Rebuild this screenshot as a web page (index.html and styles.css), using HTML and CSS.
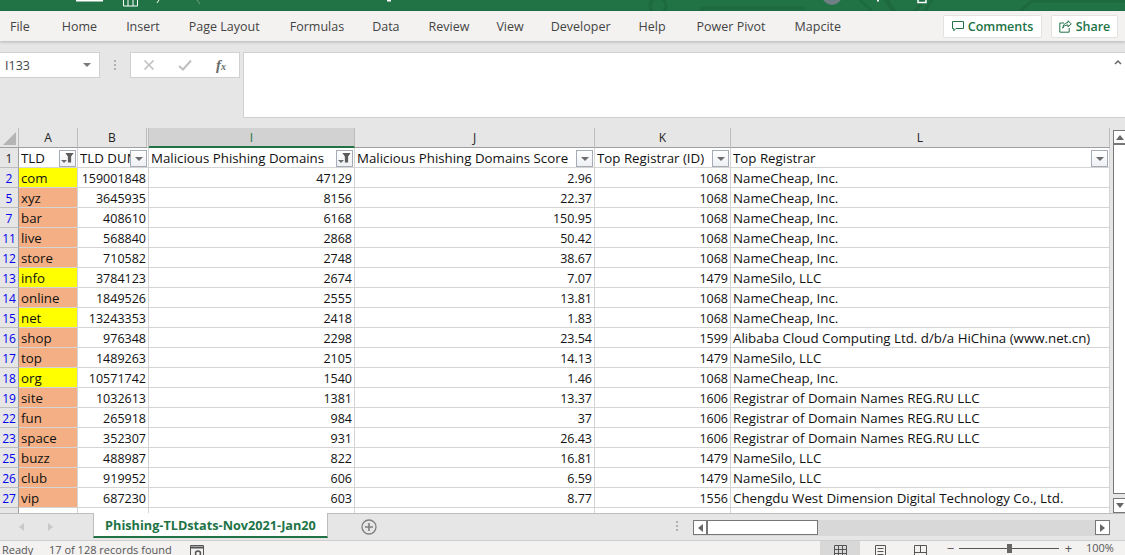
FILE: index.html
```html
<!DOCTYPE html>
<html lang="en">
<head>
<meta charset="utf-8">
<title>Phishing-TLDstats</title>
<link rel="stylesheet" href="styles.css">
</head>
<body>
<div class="app">
  <div class="titlebar">
    <svg class="title-art" viewBox="0 0 1125 11">
      <g fill="none" stroke="#1d6a3f" stroke-width="3">
        <circle cx="658" cy="6" r="8"/>
        <path d="M702 11V8H805"/>
        <path d="M860 0L872 11M885 0L893 11M925 11L932 0"/>
        <circle cx="905" cy="-3" r="17"/>
        <path d="M1020 11L1032 1H1125"/>
      </g>
      <path d="M76 0H103V1.5H76ZM387 0H391V1.5H387ZM877 0H879V1.5H877Z" fill="#fff"/>
      <path d="M123.500 0V6H137.500V0M128 0V6M133 0V6M157 3L159 0" fill="none" stroke="#fff"/>
      <path d="M197 0L200 4" fill="none" stroke="#6fa487"/>
      <path d="M918 0V2.500H926V0" fill="none" stroke="#fff" stroke-width="1.500"/>
      <circle cx="832" cy="-5" r="10" fill="#6f7f86"/>
    </svg>
  </div>
  <nav class="ribbon">
    <span class="tab tab-file">File</span>
    <span class="tab tab-home">Home</span>
    <span class="tab tab-insert">Insert</span>
    <span class="tab tab-layout">Page Layout</span>
    <span class="tab tab-formulas">Formulas</span>
    <span class="tab tab-data">Data</span>
    <span class="tab tab-review">Review</span>
    <span class="tab tab-view">View</span>
    <span class="tab tab-dev">Developer</span>
    <span class="tab tab-help">Help</span>
    <span class="tab tab-pivot">Power Pivot</span>
    <span class="tab">Mapcite</span>
    <span class="ribbon-actions">
      <button class="action action-comments"><svg class="action-icon" viewBox="0 0 12 12"><path d="M0.5 1.5H11.5V8.5H4L1.8 10.8V8.5H0.5Z" fill="none" stroke="#217346"/></svg>Comments</button>
      <button class="action action-share"><svg class="action-icon-share" viewBox="0 0 13 13"><path d="M9 2.5V0.8L12.3 3.8L9 6.8V5C6 5 4.5 6.2 3.8 8.2C3.8 5 6 2.8 9 2.5ZM5 3H0.8V12.2H10.2V8" fill="none" stroke="#217346"/></svg>Share</button>
    </span>
  </nav>
  <section class="formula-area">
    <div class="name-box"><span>I133</span><i class="caret"></i></div>
    <div class="dots"><i></i><i></i><i></i></div>
    <div class="fx-box">
      <svg class="fx-icon" viewBox="0 0 12 12"><path d="M1.5 1.5L10.5 10.5M10.5 1.5L1.5 10.5" stroke="#bfbfbf" stroke-width="1.6" fill="none"/></svg>
      <svg class="fx-icon check" viewBox="0 0 14 12"><path d="M1 7L5 10.5L13 1.5" stroke="#bfbfbf" stroke-width="2" fill="none"/></svg>
      <span class="fx-label">f<small>x</small></span>
    </div>
    <div class="formula-input"><svg class="collapse" viewBox="0 0 8 6"><path d="M1 5L4 2L7 5" stroke="#666" stroke-width="1.5" fill="none"/></svg></div>
  </section>
  <section class="sheet">
    <div class="grid-wrap">
      <table class="grid">
        <colgroup><col class="c-r"><col class="c-a"><col class="c-b"><col class="c-i"><col class="c-j"><col class="c-k"><col class="c-l"></colgroup>
        <thead>
          <tr class="heads">
            <th class="corner"><svg class="corner-mark" viewBox="0 0 13 13"><path d="M13 0V13H0Z" fill="#b4b4b4"/></svg></th>
            <th>A</th><th class="thick-r">B</th><th class="sel">I</th><th>J</th><th>K</th><th>L</th>
          </tr>
        </thead>
        <tbody>
          <tr class="filter-row">
            <td class="rn plain">1</td>
            <td><div class="hcell"><span class="clip">TLD</span><i class="fbtn on"></i></div></td>
            <td><div class="hcell"><span class="clip">TLD DUM</span><i class="fbtn"></i></div></td>
            <td><div class="hcell"><span class="clip">Malicious Phishing Domains</span><i class="fbtn on"></i></div></td>
            <td><div class="hcell"><span class="clip">Malicious Phishing Domains Score</span><i class="fbtn"></i></div></td>
            <td><div class="hcell"><span class="clip">Top Registrar (ID)</span><i class="fbtn"></i></div></td>
            <td><div class="hcell"><span class="clip">Top Registrar</span><i class="fbtn"></i></div></td>
          </tr>
          <tr><td class="rn">2</td><td class="y">com</td><td class="n">159001848</td><td class="n">47129</td><td class="n">2.96</td><td class="n">1068</td><td>NameCheap, Inc.</td></tr>
          <tr><td class="rn">5</td><td class="o">xyz</td><td class="n">3645935</td><td class="n">8156</td><td class="n">22.37</td><td class="n">1068</td><td>NameCheap, Inc.</td></tr>
          <tr><td class="rn">7</td><td class="o">bar</td><td class="n">408610</td><td class="n">6168</td><td class="n">150.95</td><td class="n">1068</td><td>NameCheap, Inc.</td></tr>
          <tr><td class="rn">11</td><td class="o">live</td><td class="n">568840</td><td class="n">2868</td><td class="n">50.42</td><td class="n">1068</td><td>NameCheap, Inc.</td></tr>
          <tr><td class="rn">12</td><td class="o">store</td><td class="n">710582</td><td class="n">2748</td><td class="n">38.67</td><td class="n">1068</td><td>NameCheap, Inc.</td></tr>
          <tr><td class="rn">13</td><td class="y">info</td><td class="n">3784123</td><td class="n">2674</td><td class="n">7.07</td><td class="n">1479</td><td>NameSilo, LLC</td></tr>
          <tr><td class="rn">14</td><td class="o">online</td><td class="n">1849526</td><td class="n">2555</td><td class="n">13.81</td><td class="n">1068</td><td>NameCheap, Inc.</td></tr>
          <tr><td class="rn">15</td><td class="y">net</td><td class="n">13243353</td><td class="n">2418</td><td class="n">1.83</td><td class="n">1068</td><td>NameCheap, Inc.</td></tr>
          <tr><td class="rn">16</td><td class="o">shop</td><td class="n">976348</td><td class="n">2298</td><td class="n">23.54</td><td class="n">1599</td><td>Alibaba Cloud Computing Ltd. d/b/a HiChina (www.net.cn)</td></tr>
          <tr><td class="rn">17</td><td class="o">top</td><td class="n">1489263</td><td class="n">2105</td><td class="n">14.13</td><td class="n">1479</td><td>NameSilo, LLC</td></tr>
          <tr><td class="rn">18</td><td class="y">org</td><td class="n">10571742</td><td class="n">1540</td><td class="n">1.46</td><td class="n">1068</td><td>NameCheap, Inc.</td></tr>
          <tr><td class="rn">19</td><td class="o">site</td><td class="n">1032613</td><td class="n">1381</td><td class="n">13.37</td><td class="n">1606</td><td>Registrar of Domain Names REG.RU LLC</td></tr>
          <tr><td class="rn">22</td><td class="o">fun</td><td class="n">265918</td><td class="n">984</td><td class="n">37</td><td class="n">1606</td><td>Registrar of Domain Names REG.RU LLC</td></tr>
          <tr><td class="rn">23</td><td class="o">space</td><td class="n">352307</td><td class="n">931</td><td class="n">26.43</td><td class="n">1606</td><td>Registrar of Domain Names REG.RU LLC</td></tr>
          <tr><td class="rn">25</td><td class="o">buzz</td><td class="n">488987</td><td class="n">822</td><td class="n">16.81</td><td class="n">1479</td><td>NameSilo, LLC</td></tr>
          <tr><td class="rn">26</td><td class="o">club</td><td class="n">919952</td><td class="n">606</td><td class="n">6.59</td><td class="n">1479</td><td>NameSilo, LLC</td></tr>
          <tr><td class="rn">27</td><td class="o">vip</td><td class="n">687230</td><td class="n">603</td><td class="n">8.77</td><td class="n">1556</td><td>Chengdu West Dimension Digital Technology Co., Ltd.</td></tr>
          <tr class="tail"><td class="rn"></td><td></td><td></td><td></td><td></td><td></td><td></td></tr>
        </tbody>
      </table>
      <div class="vscroll"><span class="vbtn vbtn-up"><i class="tri up"></i></span><span class="vtrack"></span><span class="vbtn"><i class="tri down"></i></span></div>
    </div>
  </section>
  <section class="tabbar">
    <div class="tabnav"><i class="tri left pale"></i><i class="tri right pale"></i></div>
    <div class="sheet-tab">Phishing-TLDstats-Nov2021-Jan20</div>
    <div class="add-sheet"><svg viewBox="0 0 16 16"><circle cx="8" cy="8" r="7" fill="none" stroke="#7f7f7f" stroke-width="1.3"/><path d="M8 4V12M4 8H12" stroke="#7f7f7f" stroke-width="1.6"/></svg></div>
    <div class="dots tab-dots"><i></i><i></i><i></i></div>
    <div class="hscroll"><span class="hbtn hbtn-l"><i class="tri left"></i></span><span class="hthumb"></span><span class="htrack"></span><span class="hbtn"><i class="tri right"></i></span></div>
  </section>
  <footer class="status">
    <span class="st-ready">Ready</span>
    <span class="st-count">17 of 128 records found</span>
    <svg class="st-macro" viewBox="0 0 14 14"><path d="M0.5 0.5H13.5V13.5H0.5Z" fill="none" stroke="#555"/><path d="M0.500 2.500H13.500" stroke="#555" stroke-width="2"/><circle cx="8" cy="8.500" r="2.500" fill="none" stroke="#555" stroke-width="1.500"/></svg>
    <span class="views">
      <span class="view active"><svg viewBox="0 0 13 13"><path d="M0.5 0.5H12.5V12.5H0.5ZM4.5 0.5V12.5M8.5 0.5V12.5M0.5 4.5H12.5M0.5 8.5H12.5" fill="none" stroke="#555"/></svg></span>
      <span class="view"><svg viewBox="0 0 13 13"><path d="M1.5 0.5H11.5V12.5H1.5ZM3.5 3.5H9.5M3.5 6.5H9.5M3.5 9.5H9.5" fill="none" stroke="#555"/></svg></span>
      <span class="view"><svg viewBox="0 0 13 13"><path d="M0.5 12.5V0.5H12.5V12.5M6.5 0.5V7.5M0.5 7.5H12.5" fill="none" stroke="#555"/></svg></span>
    </span>
    <span class="zoom-ctl"><span class="zsign">−</span><span class="zslider"><i class="zknob"></i></span><span class="zsign">+</span><span class="zpct">100%</span></span>
  </footer>
</div>
</body>
</html>
```
FILE: styles.css
```css
* { box-sizing: border-box; }
html, body { margin: 0; height: 100%; overflow: hidden; }
body { font-family: "Open Sans", "Noto Sans", sans-serif; color: #000; }
.app { width: 1125px; height: 555px; display: flex; flex-direction: column; overflow: hidden; background: #e6e6e6; }

.titlebar { height: 11px; flex: none; background: #217346; overflow: hidden; }
.title-art { display: block; width: 1125px; height: 11px; }

.ribbon { height: 30px; flex: none; display: flex; align-items: center; padding-left: 10px; background: #f3f2f1; box-shadow: 0 1px 3px rgba(0,0,0,.22); font-size: 12.5px; color: #444; position: relative; }
.tab { white-space: nowrap; }
.tab-file { margin-right: 32px; }
.tab-home { margin-right: 29px; }
.tab-insert { margin-right: 29px; }
.tab-layout { margin-right: 30px; }
.tab-formulas { margin-right: 28px; }
.tab-data { margin-right: 29px; }
.tab-review { margin-right: 27px; }
.tab-view { margin-right: 27px; }
.tab-dev { margin-right: 28px; }
.tab-help { margin-right: 31px; }
.tab-pivot { margin-right: 29px; }
.ribbon-actions { margin-left: auto; margin-right: 7px; display: flex; gap: 9px; }
.action { height: 23px; display: flex; align-items: center; gap: 4px; padding: 0; background: #fff; border: 1px solid #e3e2e0; border-radius: 2px; color: #217346; font: 600 12.5px "Open Sans", sans-serif; justify-content: center; }
.action-comments { width: 99px; }
.action-share { width: 67px; }
.action-icon { width: 12px; height: 12px; }
.action-icon-share { width: 13px; height: 13px; }

.formula-area { height: 87px; flex: none; display: flex; align-items: flex-start; padding-top: 11px; }
.name-box { width: 100px; height: 26px; background: #fff; border: 1px solid #d0d0d0; border-left: 0; display: flex; align-items: center; justify-content: space-between; padding: 0 8px 0 5px; font-size: 12.5px; color: #444; }
.caret { width: 0; height: 0; border: 4px solid transparent; border-top: 4px solid #7a7a7a; border-bottom: 0; }
.dots { display: flex; flex-direction: column; gap: 2px; width: 30px; align-items: center; padding-top: 8px; }
.dots i { width: 2px; height: 2px; background: #b0b0b0; }
.fx-box { width: 110px; height: 26px; background: #fff; border: 1px solid #d0d0d0; display: flex; align-items: center; padding: 0 12px; }
.fx-icon { width: 12px; height: 12px; flex: none; }
.fx-icon.check { width: 14px; margin-left: 23px; }
.fx-label { font: italic 700 15px "Liberation Serif", serif; color: #6a6a6a; margin-left: 24px; }
.fx-label small { font-size: 10px; }
.formula-input { flex: 1; height: 66px; margin-left: 3px; background: #fff; border: 1px solid #d0d0d0; border-right: 0; padding: 6px 3px 0 0; display: flex; justify-content: flex-end; align-items: flex-start; }
.collapse { width: 8px; height: 6px; }

.sheet { flex: 1; min-height: 0; overflow: hidden; }
.grid-wrap { display: flex; height: 100%; }
.grid { width: 1110px; flex: none; table-layout: fixed; border-collapse: separate; border-spacing: 0; background: #fff; font-size: 13.3px; color: #111; }
.c-r { width: 19px; } .c-a { width: 59px; } .c-b { width: 71px; } .c-i { width: 206px; } .c-j { width: 240px; } .c-k { width: 136px; } .c-l { width: 379px; }
.heads th { height: 20px; padding: 0; background: #e6e6e6; border-right: 1px solid #bdbdbd; border-bottom: 1px solid #9f9f9f; font-weight: 400; font-size: 12px; color: #222; text-align: center; }
.heads th.thick-r { border-right: 3px double #bdbdbd; }
.heads th.sel { background: #d2d2d2; border-bottom: 2px solid #217346; color: #217346; }
.heads th.corner { text-align: right; vertical-align: bottom; padding: 0 2px 2px 0; line-height: 0; }
.corner-mark { width: 13px; height: 13px; }
td { height: 20px; padding: 1px 2px 0; border-right: 1px solid #d4d4d4; border-bottom: 1px solid #d4d4d4; white-space: nowrap; overflow: hidden; }
td.n { text-align: right; font-size: 12.5px; }
td.y { background: #ffff00; }
td.o { background: #f4b084; }
td.rn { padding: 1px 1px 0; background: #e6e6e6; color: #0000ee; text-align: center; border-right: 1px solid #9f9f9f; border-bottom: 1px solid #bdbdbd; font-size: 12px; }
td.rn.plain { color: #222; }
.hcell { display: flex; align-items: center; justify-content: space-between; }
.clip { flex: 1; min-width: 0; overflow: hidden; white-space: nowrap; }
.fbtn { flex: none; width: 17px; height: 17px; margin-right: -1px; background: linear-gradient(#fff, #eef0f4); border: 1px solid #a6acb5; position: relative; }
.fbtn::after { content: ""; position: absolute; left: 4px; top: 6px; border: 4px solid transparent; border-top: 4px solid #6d6d6d; border-bottom: 0; }
.fbtn.on::after { left: 5px; top: 2px; width: 9px; height: 10px; border: 0; background: #5c5c5c; clip-path: polygon(0 0, 100% 0, 68% 40%, 68% 100%, 32% 100%, 32% 40%); }
.fbtn.on::before { content: ""; position: absolute; left: 1px; top: 9px; border: 3px solid transparent; border-top: 3px solid #6d6d6d; border-bottom: 0; }
.tail td { height: 6px; padding: 0; border-bottom: 0; }
.tail td.rn { padding: 0; background: #e6e6e6; }

.vscroll { flex: 1; margin: 2px 0 0 3px; display: flex; flex-direction: column; background: #e6e6e6; }
.vbtn { height: 15px; flex: none; border: 1px solid #777; border-right: 0; display: flex; align-items: center; justify-content: center; background: #fff; }
.vbtn-up { border-bottom-width: 2px; }
.vtrack { flex: 1; background: #fff; border-left: 1px solid #777; border-bottom: 1px solid #777; margin-bottom: 4px; }
.tri { width: 0; height: 0; display: block; border: 4px solid transparent; }
.tri.up { border-top: 0; border-bottom: 5px solid #666; }
.tri.down { border-bottom: 0; border-top: 5px solid #666; }
.tri.left { border-left: 0; border-right: 5px solid #666; }
.tri.right { border-right: 0; border-left: 5px solid #666; }
.tri.pale.left { border-right-color: #c8c8c8; }
.tri.pale.right { border-left-color: #c8c8c8; }

.tabbar { height: 28px; flex: none; display: flex; align-items: flex-start; background: #e6e6e6; border-top: 1px solid #bdbdbd; border-bottom: 1px solid #cfcfcf; position: relative; }
.tabnav { width: 93px; height: 26px; display: flex; align-items: center; justify-content: flex-start; gap: 24px; padding-left: 19px; }
.sheet-tab { width: 235px; height: 25px; margin-top: -1px; background: #fff; border-left: 1px solid #bdbdbd; border-right: 1px solid #bdbdbd; border-bottom: 2px solid #217346; color: #217346; font: 700 12.7px/24px "Open Sans", sans-serif; text-align: center; white-space: nowrap; }
.add-sheet { width: 17px; height: 17px; margin: 5px 0 0 33px; }
.add-sheet svg { width: 16px; height: 16px; display: block; }
.tab-dots { width: 18px; margin-left: 290px; padding-top: 7px; }
.hscroll { margin-left: 7px; width: 417px; height: 16px; margin-top: 6px; display: flex; background: #d8d8d8; }
.hbtn { width: 15px; height: 15px; flex: none; border: 1px solid #777; background: #fff; display: flex; align-items: center; justify-content: center; }
.hbtn-l { border-right-width: 2px; }
.hthumb { width: 110px; background: #fff; border: 1px solid #777; border-left: 0; height: 15px; }
.htrack { flex: 1; }

.status { height: 14px; flex: none; display: flex; align-items: flex-start; padding-left: 2px; background: #f3f2f1; font-size: 11px; color: #555; position: relative; overflow: hidden; }
.status > * { flex: none; white-space: nowrap; }
.status span { line-height: 18px; }
.st-ready { width: 47px; }
.st-count { width: 141px; }
.st-macro { width: 14px; height: 14px; margin-top: 4px; }
.views { display: flex; margin-left: 616px; }
.view { width: 40px; height: 14px; display: flex; justify-content: center; padding-top: 4px; }
.view.active { background: #d8d8d8; }
.view svg { width: 13px; height: 13px; flex: none; }
.zoom-ctl { display: flex; align-items: center; margin-left: 6px; height: 14px; }
.zsign { width: 9px; text-align: center; font-size: 13px; }
.zslider { width: 100px; height: 1px; margin: 0 5px 0 4px; background: #555; position: relative; }
.zknob { position: absolute; left: 48px; top: -4px; width: 5px; height: 9px; background: #666; }
.zpct { width: 26px; margin-left: 13px; white-space: nowrap; }
```
